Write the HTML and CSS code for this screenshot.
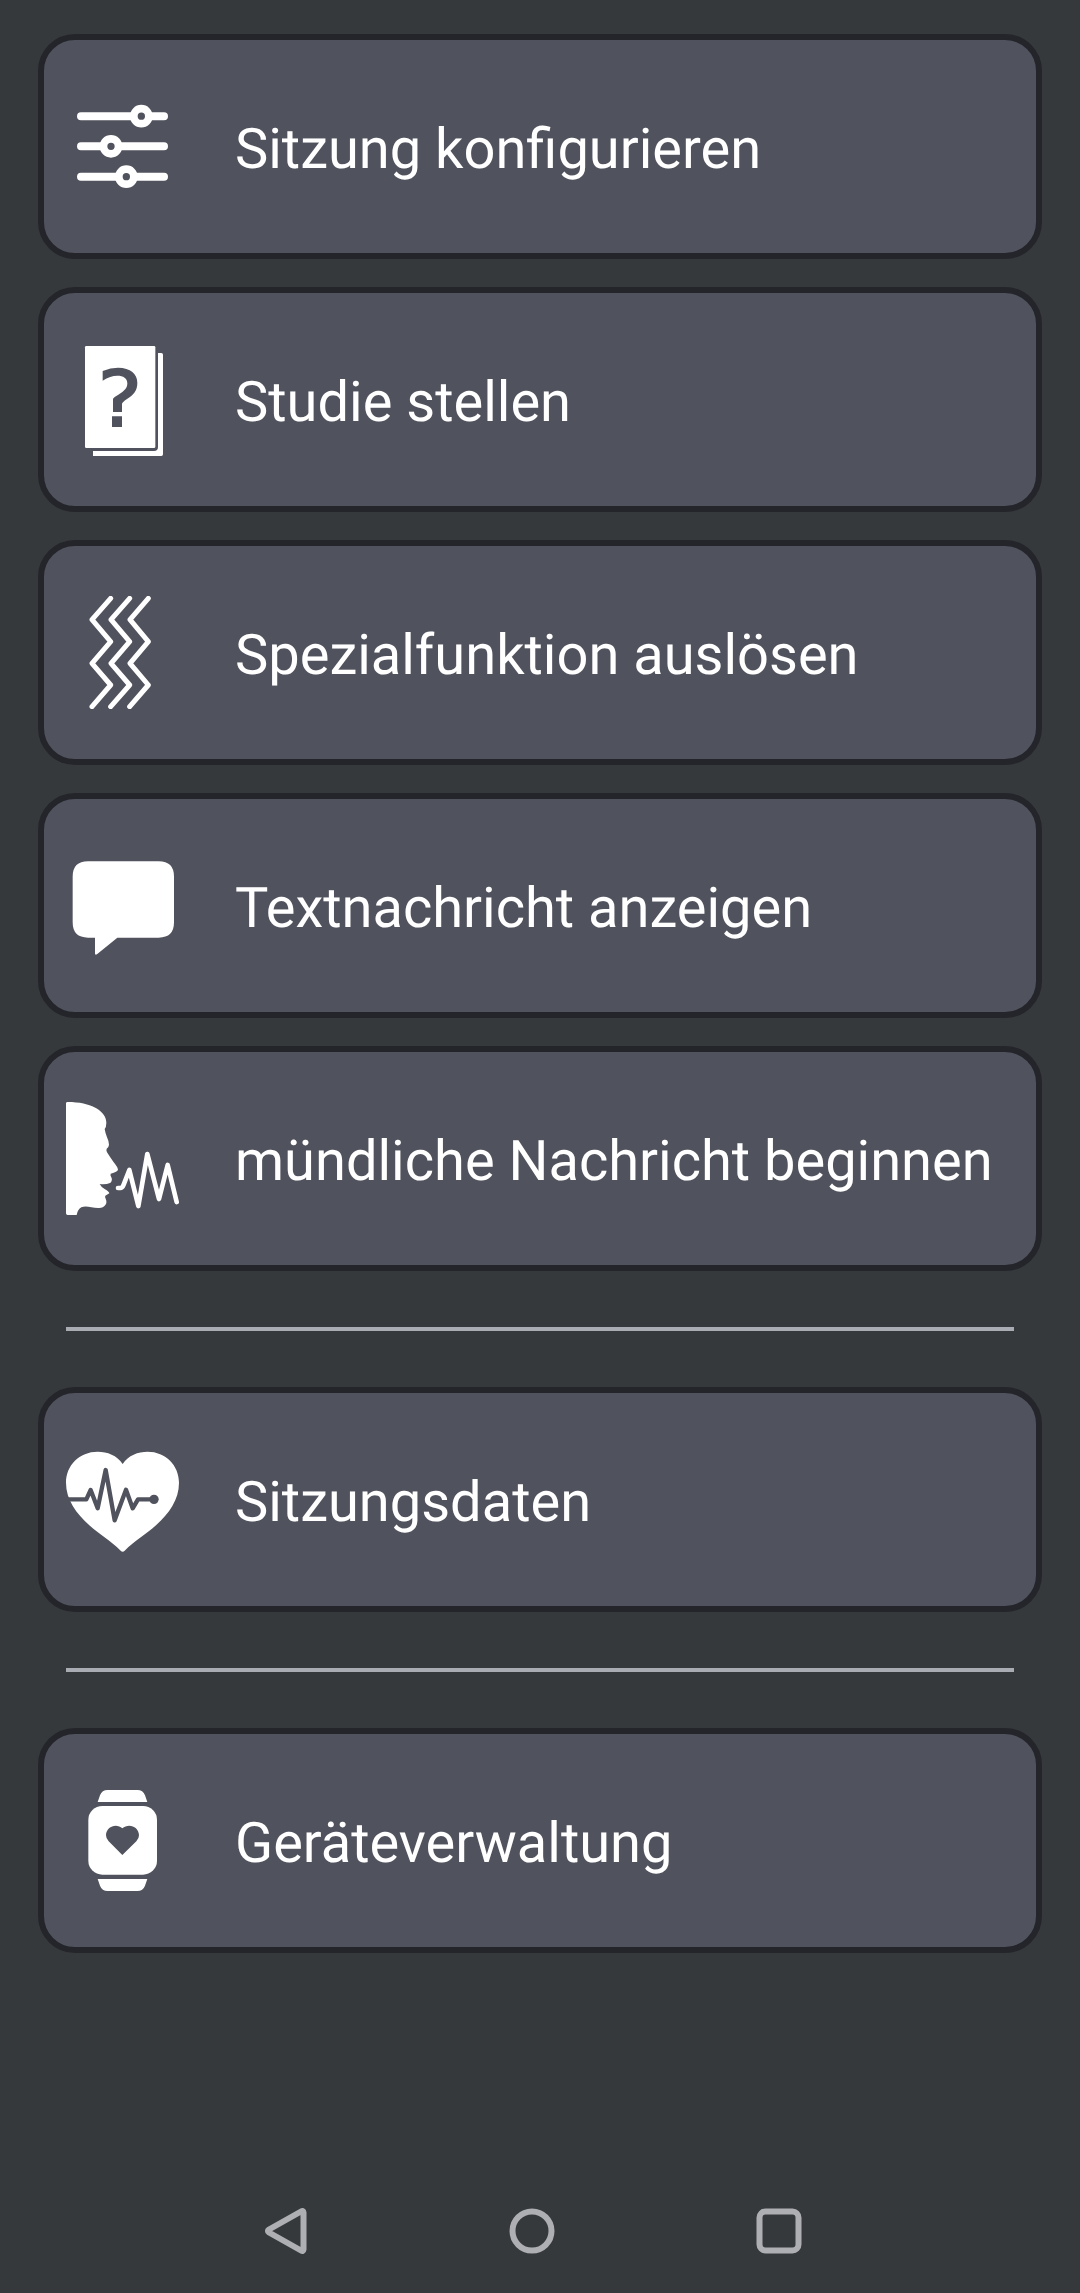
FILE: index.html
```html
<!DOCTYPE html>
<html lang="de">
<head>
<meta charset="utf-8">
<title>Sitzung</title>
<link rel="stylesheet" href="styles.css">
</head>
<body>
<main class="menu">
  <a class="card">
    <svg class="icon" viewBox="108 195 339 339">
      <g class="line" stroke-width="24">
        <path d="M153 273.500H402M153 364H402M153 455H402"/>
      </g>
      <g class="knob">
        <circle cx="334" cy="273.500" r="22.500"/><circle cx="243" cy="364" r="22.500"/><circle cx="289" cy="455" r="22.500"/>
      </g>
    </svg>
    <span class="label">Sitzung konfigurieren</span>
  </a>
  <a class="card">
    <svg class="icon" viewBox="48 69 339 339">
      <path class="fill" d="M324 99H334Q339 99 339 104V403Q339 408 334 408H129V393H312Q324 393 324 381Z"/>
      <rect class="fill" x="105" y="78" width="211" height="306" rx="4"/>
      <path class="cut" d="M158 153Q182 143 204 143C242 143 262 162 262 188C262 213 250 224 231 237Q216 247 216 252V276H189V236Q192 231 205 224C224 213 232 204 232 190C232 175 220 167 202 167Q181 167 158 182ZM186 289H216V321H186Z"/>
    </svg>
    <span class="label">Studie stellen</span>
  </a>
  <a class="card">
    <svg class="icon" viewBox="48 63 339 339">
      <g class="line" stroke-width="15">
        <path d="M182 70L126 134L182 200L126 265L182 330L126 395"/>
        <path d="M239 70L183 134L239 200L183 265L239 330L182 395"/>
        <path d="M295 70L240 134L295 200L240 265L295 330L239 395"/>
      </g>
    </svg>
    <span class="label">Spezialfunktion auslösen</span>
  </a>
  <a class="card">
    <svg class="icon" viewBox="48 42 339 339">
      <path class="fill" d="M114 79H326Q372 79 372 125V262Q372 308 326 308H202L141 358Q135 362 135 355V308H114Q68 308 68 262V125Q68 79 114 79Z"/>
    </svg>
    <span class="label">Textnachricht anzeigen</span>
  </a>
  <a class="card">
    <svg class="icon" viewBox="48 51 339 339">
      <path class="fill" d="M48 55Q48 51 53 51C88 51 116 57 139 70C159 82 169 97 169 114Q169 126 164 132Q166 144 171 157Q177 170 177 179Q177 185 170 191Q168 196 171 202Q179 215 190 230Q204 247 204 254Q203 260 182 266Q180 271 184 277Q187 282 185 287Q184 293 180 294Q168 299 149 297Q154 307 164 312Q178 320 178 325L166 332Q164 335 167 341Q172 352 166 360Q159 370 145 369C124 368 107 361 94 367Q83 373 80 390H53Q48 390 48 385Z"/>
      <path class="line" stroke-width="14" d="M204 309H211Q217 309 221 299L238 255L265 363L292 207L327 342L353 240L380 351"/>
    </svg>
    <span class="label">mündliche Nachricht beginnen</span>
  </a>
  <hr class="divider">
  <a class="card">
    <svg class="icon" viewBox="48 54 339 339">
      <path class="fill" d="M218 117C201 91 172 80 143 80C88 80 48 121 48 173C48 224 79 265 118 301C147 328 182 347 212 377Q218 383 224 377C254 347 289 328 318 301C357 265 387 224 387 173C387 121 347 80 293 80C264 80 235 91 218 117Z"/>
      <path class="trace" d="M48 223H109L122 195L143 250L167 135L194 286L228 194L248 250L264 223H312"/>
      <circle class="cut" cx="312" cy="223" r="14"/>
    </svg>
    <span class="label">Sitzungsdaten</span>
  </a>
  <hr class="divider">
  <a class="card">
    <svg class="icon" viewBox="48 57 339 339">
      <path class="fill" d="M143 111L150 91Q156 75 173 75H262Q279 75 285 91L292 111ZM143 342H292L285 362Q279 378 262 378H173Q156 378 150 362Z"/>
      <rect class="fill" x="115" y="123" width="206" height="206" rx="42"/>
      <path class="cut" d="M217 270L176 229Q168 221 168 211C168 184 200 173 217 190C235 173 267 184 267 211Q267 221 259 229Z"/>
    </svg>
    <span class="label">Geräteverwaltung</span>
  </a>
</main>
<nav class="navbar">
  <svg class="nav-icon" viewBox="0 0 48 48"><path d="M42.500 5.500V42.500Q42.300 44.800 40 43.500L8 25.500Q5.800 24 8 22.500L40 4.500Q42.300 3.200 42.500 5.500Z"/></svg>
  <svg class="nav-icon" viewBox="0 0 48 48"><circle cx="24" cy="24" r="19.500"/></svg>
  <svg class="nav-icon" viewBox="0 0 48 48"><rect x="4.500" y="4.500" width="39" height="39" rx="6"/></svg>
</nav>
</body>
</html>
```
FILE: styles.css
```css
* { box-sizing: border-box; }
body {
  margin: 0;
  height: 2293px;
  padding: 34px 38px 38px;
  display: flex;
  flex-direction: column;
  justify-content: space-between;
  background: #36393c;
  color: #fff;
  font-family: Roboto, sans-serif;
  text-rendering: geometricPrecision;
}
.menu { display: flex; flex-direction: column; gap: 28px; }
.card {
  display: flex;
  align-items: center;
  gap: 56px;
  height: 225px;
  padding: 0 22px;
  border: 6px solid #24252b;
  border-radius: 37px;
  background: #50525d;
}
.icon { flex: none; width: 113px; height: 113px; }
.label { padding-top: 4px; font-size: 56px; line-height: 66px; white-space: nowrap; }
.fill { fill: #fff; }
.cut { fill: #50525d; }
.line { fill: none; stroke: #fff; stroke-linecap: round; stroke-linejoin: round; }
.knob { fill: #50525d; stroke: #fff; stroke-width: 23; }
.trace { fill: none; stroke: #50525d; stroke-width: 13; stroke-linejoin: round; }
.divider { width: 948px; height: 4px; margin: 28px auto; border: 0; background: #a9acb3; }
.navbar { display: flex; gap: 199px; padding-left: 223px; }
.nav-icon { width: 48px; height: 48px; fill: none; stroke: #adafb2; stroke-width: 6; stroke-linejoin: round; }
```
